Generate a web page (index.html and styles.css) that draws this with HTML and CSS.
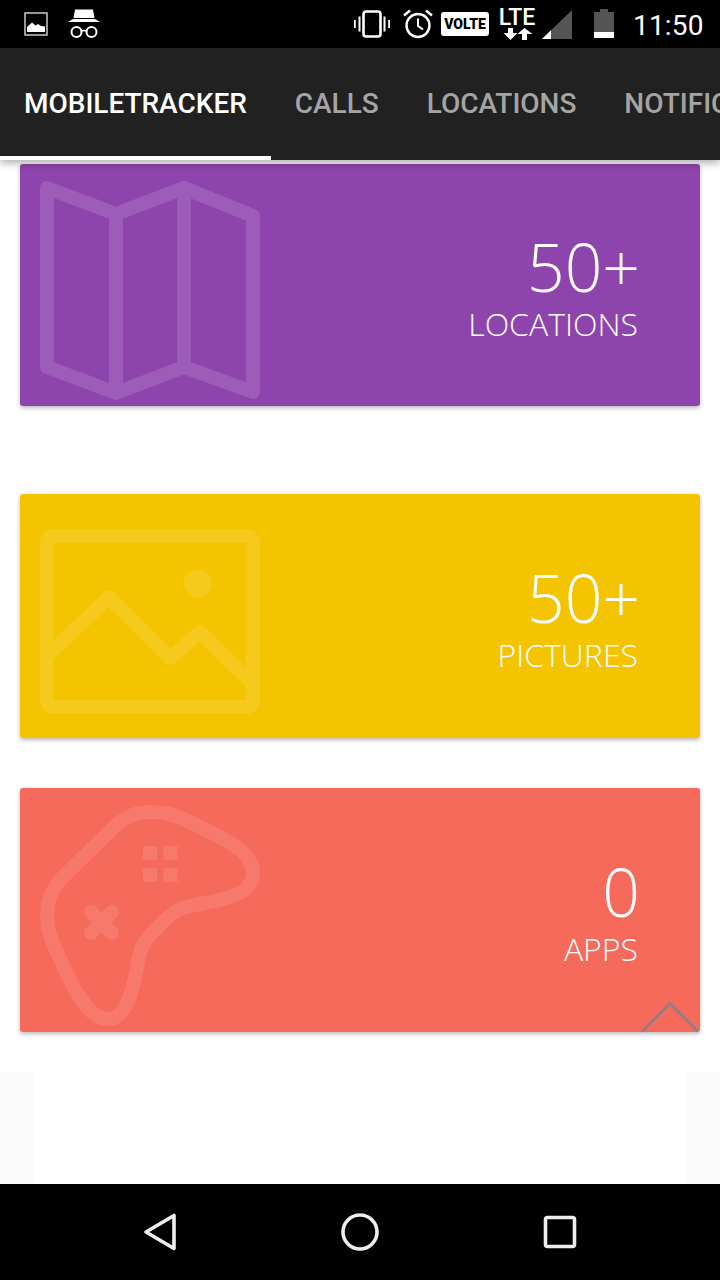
FILE: index.html
```html
<!DOCTYPE html>
<html lang="en">
<head>
  <meta charset="UTF-8" />
  <title>MobileTracker</title>
  <meta name="viewport" content="width=device-width, initial-scale=1.0" />
  <link rel="stylesheet" href="styles.css">
</head>
<body>

<!-- status bar -->
<div class="status">
  <div class="status-left">
    <svg class="ic-image" width="24" height="24" viewBox="0 0 24 24">
      <rect x="1" y="1" width="22" height="22" fill="none" stroke="#bdbdbd" stroke-width="1.6"/>
      <path d="M3 20V15L8 10.500L11.500 13.500L14 12L17 14L21 14.500V20Z" fill="#fff"/>
    </svg>
    <svg class="ic-incognito" width="32" height="30" viewBox="0 0 32 30">
      <path d="M7 0.500H25L26.500 9H5.500Z" fill="#fff"/>
      <path d="M0 13L5 10H27L32 13Z" fill="#fff"/>
      <circle cx="8.500" cy="23" r="5" fill="none" stroke="#fff" stroke-width="2"/>
      <circle cx="23.500" cy="23" r="5" fill="none" stroke="#fff" stroke-width="2"/>
      <path d="M13 22.500Q16 20.500 19 22.500" fill="none" stroke="#fff" stroke-width="1.600"/>
    </svg>
  </div>
  <div class="status-right">
    <svg class="ic-vibrate" width="36" height="28" viewBox="0 0 36 28">
      <rect x="9.500" y="1.500" width="17" height="25" rx="2.500" fill="none" stroke="#fff" stroke-width="2.600"/>
      <path d="M5.500 6.500V21.500M0.800 10V18M30.500 6.500V21.500M35.200 10V18" stroke="#fff" stroke-width="2" fill="none"/>
    </svg>
    <svg class="ic-alarm" width="30" height="30" viewBox="0 0 30 30">
      <circle cx="15" cy="16.500" r="11.500" fill="none" stroke="#fff" stroke-width="2.400"/>
      <path d="M15 9.500V17L20 20.500" fill="none" stroke="#fff" stroke-width="2"/>
      <path d="M1 6.500L7 1.500M29 6.500L23 1.500" stroke="#fff" stroke-width="2.400"/>
    </svg>
    <div class="volte">VOLTE</div>
    <div class="lte">
      <div class="lte-text">LTE</div>
      <svg class="lte-arrows" width="36" height="12" viewBox="0 0 36 12">
        <path d="M9 0H14V5H18.500L11.500 12L4.500 5H9Z" fill="#fff"/>
        <path d="M23 12H28V6H33.500L25.500 0L18.500 6H23Z" fill="#fff"/>
      </svg>
    </div>
    <svg class="ic-signal" width="30" height="29" viewBox="0 0 30 29">
      <path d="M0 29L30 0V29Z" fill="#555"/>
      <path d="M0 29L9 20.300V29Z" fill="#fff"/>
    </svg>
    <svg class="ic-battery" width="20" height="29" viewBox="0 0 20 29">
      <path d="M6 0H14V3H20V29H0V3H6Z" fill="#555"/>
      <rect y="23" width="20" height="6" fill="#fff"/>
    </svg>
    <div class="clock">11:50</div>
  </div>
</div>

<!-- tabs -->
<div class="tabs">
  <div class="tab active">MOBILETRACKER</div>
  <div class="tab">CALLS</div>
  <div class="tab">LOCATIONS</div>
  <div class="tab">NOTIFICATIONS</div>
</div>

<div class="content">

  <div class="card card-locations">
    <svg class="card-icon" width="220" height="220" viewBox="40 180 220 220">
      <path d="M47 187L116 213L184 187L253 215V391L184 366L116 392L47 366ZM116 213V392M184 187V366" fill="none" stroke="#fff" stroke-width="14" stroke-linejoin="round"/>
    </svg>
    <div class="card-text">
      <div class="count">50+</div>
      <div class="label">LOCATIONS</div>
    </div>
  </div>

  <div class="card card-pictures">
    <svg class="card-icon" width="220" height="185" viewBox="40 529 220 185">
      <rect x="47" y="536" width="206" height="171" rx="7" fill="none" stroke="#fff" stroke-width="14"/>
      <circle cx="197.700" cy="583.500" r="14" fill="#fff"/>
      <path d="M47 656L109 597L170 658L200 632L251 682" fill="none" stroke="#fff" stroke-width="14" stroke-linejoin="round"/>
    </svg>
    <div class="card-text">
      <div class="count">50+</div>
      <div class="label">PICTURES</div>
    </div>
  </div>

  <div class="card card-apps">
    <svg class="card-icon" width="220" height="221" viewBox="40 805 220 221">
      <path d="M150 812C166 812 176 815 190 822L222 838C240 848 253 858 253 873C253 890 235 898 205 903C185 906 175 910 165 920L150 935C143 943 141 948 139 957C134 985 128 1019 108 1019C92 1019 80 1000 70 980L55 948C50 937 47 928 47 917C47 900 52 889 63 877L113 828C125 817 135 812 150 812Z" fill="none" stroke="#fff" stroke-width="14"/>
      <path d="M143 846H157V860H143ZM163.500 846H177.500V860H163.500ZM143 868H157V882H143ZM163.500 868H177.500V882H163.500Z" fill="#fff"/>
      <path d="M91 912L112 933M112 912L91 933" stroke="#fff" stroke-width="14" stroke-linecap="round"/>
    </svg>
    <div class="card-text">
      <div class="count">0</div>
      <div class="label">APPS</div>
    </div>
  </div>

  <svg class="scroll-top" width="60" height="32" viewBox="0 0 60 32">
    <path d="M2 30.500L30 2.500L58 30.500" fill="none" stroke="#7f7f8c" stroke-opacity="0.8" stroke-width="3"/>
  </svg>

  <div class="footer-strip">
    <div class="footer-inner"></div>
  </div>
</div>

<!-- android nav -->
<div class="navbar">
  <svg width="34" height="38" viewBox="0 0 34 38">
    <path d="M3 19L31 2.500V35.500Z" fill="none" stroke="#eee" stroke-width="3.600" stroke-linejoin="round"/>
  </svg>
  <svg width="38" height="38" viewBox="0 0 38 38">
    <circle cx="19" cy="19" r="17" fill="none" stroke="#eee" stroke-width="3.600"/>
  </svg>
  <svg width="34" height="34" viewBox="0 0 34 34">
    <rect x="2.500" y="2.500" width="29" height="29" rx="2" fill="none" stroke="#eee" stroke-width="3.600"/>
  </svg>
</div>

</body>
</html>
```

FILE: styles.css
```css
* { box-sizing: border-box; }
body {
  margin: 0;
  width: 720px;
  height: 1280px;
  overflow: hidden;
  background: #fff;
  font-family: 'Roboto', sans-serif;
  display: flex;
  flex-direction: column;
}

.status {
  height: 48px;
  background: #000;
  display: flex;
  justify-content: space-between;
  align-items: center;
  padding: 0 16px 0 24px;
  color: #fff;
}
.status-left, .status-right { display: flex; align-items: center; }
.ic-incognito { margin-left: 20px; }
.ic-alarm { margin-left: 13px; }
.volte {
  margin-left: 8px;
  width: 48px;
  height: 24px;
  line-height: 24px;
  background: #fff;
  color: #000;
  border-radius: 3px;
  font-size: 14px;
  font-weight: 900;
  text-align: center;
}
.lte {
  margin-left: 10px;
  width: 36px;
  display: flex;
  flex-direction: column;
  align-items: center;
}
.lte-text { font-size: 23px; line-height: 17px; font-weight: 500; }
.lte-arrows { margin-top: 2px; }
.ic-signal { margin-left: 7px; }
.ic-battery { margin-left: 22px; margin-top: -1px; }
.clock { margin-left: 19px; font-size: 28px; width: 71px; margin-top: 2px; letter-spacing: 0.2px; }

.tabs {
  height: 112px;
  background: #212121;
  display: flex;
  overflow: hidden;
  position: relative;
  z-index: 2;
  box-shadow: 0 3px 8px rgba(0, 0, 0, 0.32);
}
.tab {
  flex: none;
  padding: 0 24px;
  line-height: 112px;
  font-size: 28px;
  font-weight: 500;
  letter-spacing: -0.02px;
  color: rgba(255, 255, 255, 0.6);
}
.tab.active {
  color: #fff;
  border-bottom: 4px solid #fff;
}

.content {
  height: 1024px;
  padding-top: 4px;
  position: relative;
  overflow: hidden;
}

.card {
  margin: 0 20px;
  height: 244px;
  border-radius: 3px;
  padding: 0 62px 0 20px;
  display: flex;
  justify-content: space-between;
  align-items: center;
  color: #fff;
  box-shadow: 0 2px 4px rgba(0, 0, 0, 0.28);
}
.card-locations { height: 242px; background: #8e44ad; margin-bottom: 88px; }
.card-pictures { background: #f4c400; margin-bottom: 50px; }
.card-apps { background: #f56a5b; }

.card-icon { flex: none; }
.card-locations .card-icon { opacity: 0.13; margin-top: 12px; }
.card-pictures .card-icon { opacity: 0.11; margin-top: 10px; }
.card-apps .card-icon { opacity: 0.1; margin-top: 10px; }

.card-text {
  text-align: right;
  font-family: 'Open Sans', sans-serif;
  font-weight: 300;
  margin-top: 4px;
}
.count { font-size: 66px; line-height: 74px; margin-right: -2px; }
.label { font-size: 32px; line-height: 42px; }

.scroll-top {
  position: absolute;
  right: 20px;
  top: 841px;
}

.footer-strip {
  margin-top: 40px;
  height: 112px;
  background: #fafafa;
  padding: 0 34px;
}
.footer-inner { height: 112px; background: #fff; }

.navbar {
  height: 96px;
  background: #000;
  display: flex;
  align-items: center;
  justify-content: space-between;
  padding: 0 143px;
}
```
